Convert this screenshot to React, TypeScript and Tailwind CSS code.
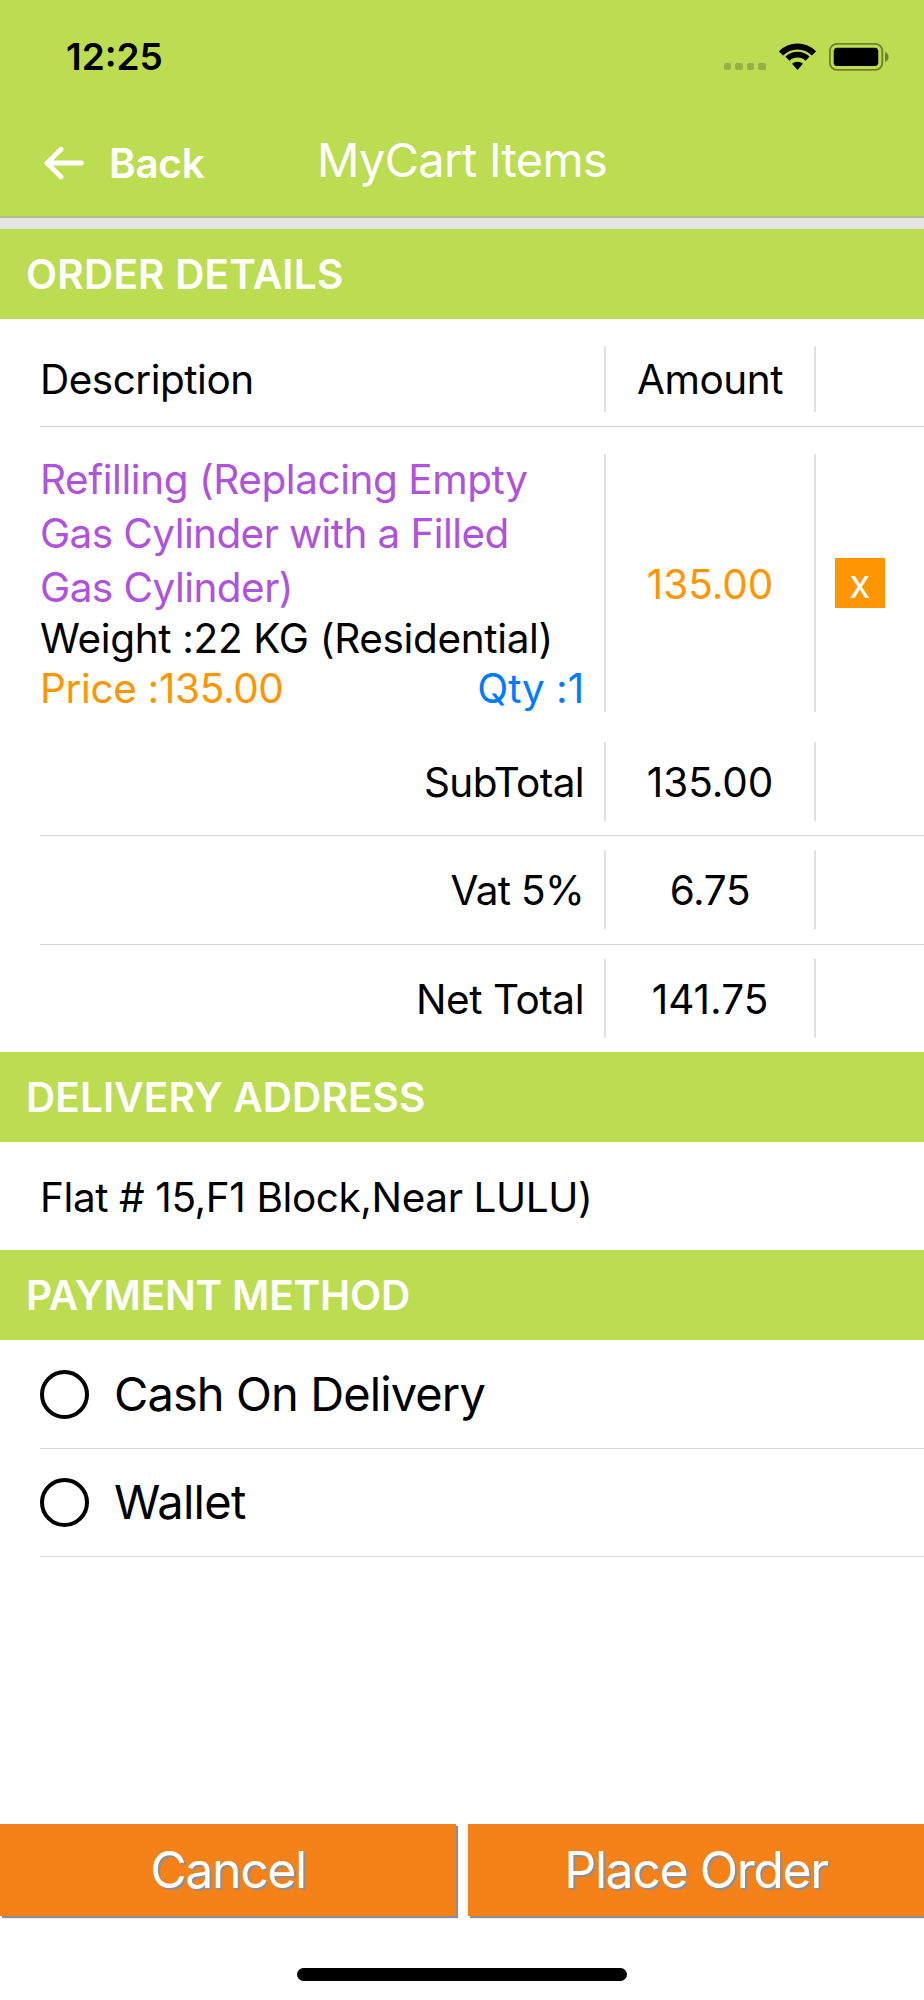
import React from 'react';

const totals = [
  { label: 'SubTotal', value: '135.00', labelClass: 'tracking-[-0.6px]', valueClass: 'tracking-[-0.05px]' },
  { label: 'Vat 5%', value: '6.75', labelClass: 'tracking-[-0.7px]', valueClass: 'tracking-[-0.35px]' },
  { label: 'Net Total', value: '141.75', labelClass: 'tracking-[-0.45px]', valueClass: 'tracking-[0px]' },
];

const StatusBar = () => (
  <div className="flex h-[114px] items-center justify-between pl-[66px] pr-[35px] text-black">
    <span className="-mt-[2px] text-[37px] font-semibold leading-none">12:25</span>
    <div className="flex items-center">
      <div className="mr-[13px] mt-[19px] flex gap-[4px]">
        {[0, 1, 2, 3].map((dot) => (
          <span key={dot} className="h-[7.5px] w-[7.6px] rounded-[2px] bg-[#96b042]" />
        ))}
      </div>
      <svg width="37" height="28" viewBox="0 0 37 28" className="mr-[13px]" fill="none">
        <path d="M2 10.5A23 23 0 0 1 35 10.5" stroke="black" strokeWidth="6" />
        <path d="M8.4 15.7A14.8 14.8 0 0 1 28.6 15.7" stroke="black" strokeWidth="5.8" />
        <path d="M18.5 27L13 20.8A8.3 8.3 0 0 1 24 20.8Z" fill="black" />
      </svg>
      <svg width="60" height="28" viewBox="0 0 60 28" fill="none">
        <rect x="0.9" y="0.9" width="52.4" height="26" rx="7" stroke="#6f8233" strokeWidth="1.9" />
        <rect x="4.7" y="4.7" width="44.6" height="18.3" rx="3.5" fill="black" />
        <path d="M56 8.8C60.8 11 60.8 16.8 56 19Z" fill="#6f8233" />
      </svg>
    </div>
  </div>
);

const SectionTitle = ({ children, className }: { children: React.ReactNode; className: string }) => (
  <h2 className={`flex h-[90px] items-center bg-[#bcdc51] pl-[26px] pt-[2px] font-semibold text-white ${className}`}>
    {children}
  </h2>
);

const PaymentOption = ({ label, className }: { label: string; className: string }) => (
  <label className="ml-[40px] flex h-[108.5px] items-center border-b border-[#d6d6d6]">
    <span className="h-[49px] w-[49px] rounded-full border-[4px] border-black" />
    <span className={`-mt-[2px] ml-[25px] text-[47px] leading-none ${className}`}>{label}</span>
  </label>
);

const App = () => {
  return (
    <div className="flex h-[2000px] w-[924px] flex-col overflow-hidden bg-white font-['Inter',sans-serif] text-[40.5px] text-black">
      {/* Header */}
      <header className="h-[218px] border-b-2 border-[#b3bd8c] bg-[#bcdc51] text-white">
        <StatusBar />
        <div className="flex h-[98px] items-center">
          <svg width="40" height="34" viewBox="0 0 40 34" fill="none" className="ml-[44px]">
            <path d="M17 3.2L3 17L17 30.8M3.5 17H37.5" stroke="white" strokeWidth="4.8" strokeLinecap="round" strokeLinejoin="round" />
          </svg>
          <span className="ml-[25px] mt-[2px] w-[208px] font-semibold leading-none tracking-[-0.3px]">Back</span>
          <h1 className="-mt-[8px] whitespace-nowrap text-[47px] leading-none tracking-[-0.7px]">MyCart Items</h1>
        </div>
      </header>
      <div className="h-[11px] shrink-0 bg-[#e4e4e4]" />

      {/* Order details */}
      <SectionTitle className="tracking-[0.2px]">ORDER DETAILS</SectionTitle>
      <div className="ml-[40px] flex h-[108px] border-b border-[#d2d2d2] pt-[27px]">
        <div className="flex h-[66px] w-[564px] items-center pt-[2px] tracking-[-0.5px]">Description</div>
        <div className="flex h-[66px] w-[212px] items-center justify-center border-x-2 border-[#e0e0e0] pt-[2px] tracking-[-0.5px]">
          Amount
        </div>
      </div>

      <div className="ml-[40px] flex h-[301px] pt-[27px]">
        <div className="-mt-[1px] w-[564px] whitespace-nowrap pr-[20px]">
          <p className="leading-[54px] tracking-[-0.45px] text-[#af52de]">
            Refilling (Replacing Empty
            <br />
            <span className="tracking-[-0.6px]">Gas Cylinder with a Filled</span>
            <br />
            <span className="tracking-[-0.55px]">Gas Cylinder)</span>
          </p>
          <p className="-mt-[1.5px] leading-[50px] tracking-[-0.35px]">Weight :22 KG (Residential)</p>
          <div className="flex justify-between leading-[50px]">
            <span className="tracking-[-0.35px] text-[#ff9500]">Price :135.00</span>
            <span className="tracking-[-0.1px] text-[#007aff]">Qty :1</span>
          </div>
        </div>
        <div className="flex h-[258px] w-[212px] items-center justify-center border-x-2 border-[#e0e0e0] pt-[4px] tracking-[-0.05px] text-[#ff9500]">
          135.00
        </div>
        <div className="flex h-[258px] items-center pl-[19px]">
          <button className="flex h-[50px] w-[50px] items-center justify-center bg-[#ff9500] pt-[3px] text-[39px] text-white">x</button>
        </div>
      </div>

      {totals.map((row, i) => (
        <div
          key={row.label}
          className={`ml-[40px] flex pt-[14px] ${i < totals.length - 1 ? 'h-[108.3px] border-b border-[#d2d2d2]' : 'h-[107.7px]'}`}
        >
          <div className={`flex h-[79px] w-[564px] items-center justify-end pr-[20px] pt-[4px] ${row.labelClass}`}>{row.label}</div>
          <div className={`flex h-[79px] w-[212px] items-center justify-center border-x-2 border-[#e0e0e0] pt-[4px] ${row.valueClass}`}>
            {row.value}
          </div>
        </div>
      ))}

      {/* Delivery address */}
      <SectionTitle className="tracking-[0.1px]">DELIVERY ADDRESS</SectionTitle>
      <div className="flex h-[108px] items-center pl-[40px] pt-[4px] tracking-[-0.4px]">Flat # 15,F1 Block,Near LULU)</div>

      {/* Payment method */}
      <SectionTitle className="tracking-[-0.2px]">PAYMENT METHOD</SectionTitle>
      <PaymentOption label="Cash On Delivery" className="tracking-[-0.9px]" />
      <PaymentOption label="Wallet" className="tracking-[-0.7px]" />

      {/* Actions */}
      <div className="mt-auto flex h-[92px] shrink-0 gap-[12px] text-[50px] text-white">
        <button className="flex-1 bg-[#f58218] tracking-[-1.4px] shadow-[2px_2px_1px_#8e8e93] [text-shadow:2px_2px_1px_#8e8e93]">
          Cancel
        </button>
        <button className="flex-1 bg-[#f58218] tracking-[-1.4px] shadow-[2px_2px_1px_#8e8e93] [text-shadow:2px_2px_1px_#8e8e93]">
          Place Order
        </button>
      </div>
      <div className="mx-auto mb-[19px] mt-[52px] h-[13px] w-[330px] shrink-0 rounded-full bg-black" />
    </div>
  );
};

export default App;
